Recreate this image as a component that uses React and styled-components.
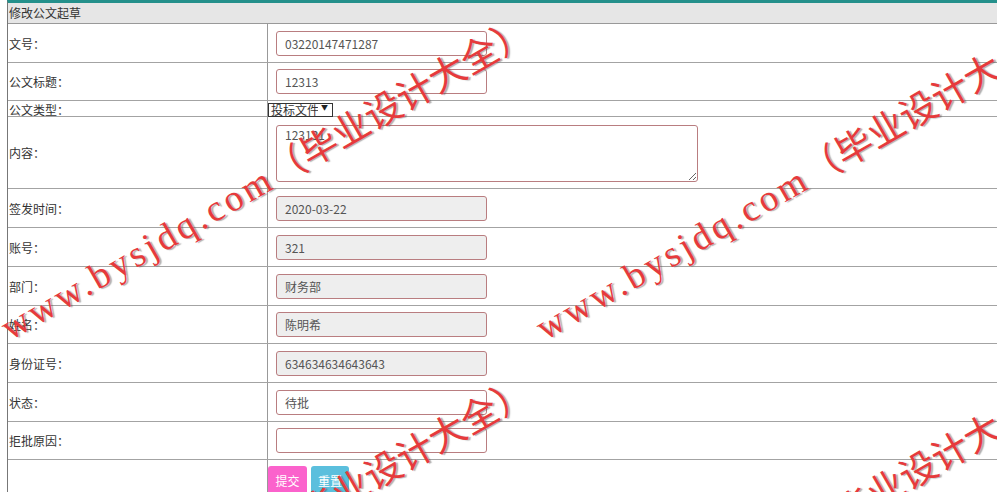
import React from "react";
import styled, { createGlobalStyle } from "styled-components";

const Global = createGlobalStyle`
  html, body { margin: 0; padding: 0; background: #fff; }
  body { font-family: "Noto Sans CJK SC", "Liberation Sans", sans-serif; font-size: 12px; color: #333; }
`;

const Page = styled.div`
  position: relative;
  height: 492px;
  overflow: hidden;
  padding-left: 7px;
`;

const Panel = styled.div`
  border-top: 3px solid #24908b;
  border-left: 1px solid #777;
  min-height: 489px;
`;

const Title = styled.div`
  height: 20px;
  line-height: 20px;
  background: #e6e6e6;
  border-bottom: 1px solid #999;
  padding-left: 1px;
  font-size: 12px;
  color: #333;
`;

const Row = styled.div`
  display: grid;
  grid-template-columns: 260px 1fr;
  height: ${(p) => p.$h}px;
  box-sizing: border-box;
  border-bottom: ${(p) => (p.$last ? "none" : "1px solid #a3a3a3")};
`;

const Label = styled.div`
  display: flex;
  align-items: center;
  border-right: 1px solid #999;
  padding-left: 1px;
  font-size: 12px;
  color: #333;
  white-space: nowrap;
  overflow: hidden;
`;

const Field = styled.div`
  display: flex;
  align-items: ${(p) => (p.$top ? "flex-start" : "center")};
  padding-top: ${(p) => (p.$top ? "3px" : "0")};
  gap: 4px;
`;

const Input = styled.input`
  box-sizing: border-box;
  width: 211px;
  height: 25px;
  margin-left: 8px;
  padding: 0 8px;
  border: 1px solid #b97d80;
  border-radius: 3px;
  background: ${(p) => (p.readOnly ? "#eeeeee" : "#fff")};
  font-family: "Noto Sans CJK SC", "Liberation Sans", sans-serif;
  font-size: 12px;
  color: #555;
  outline: none;
`;

const TextArea = styled.textarea`
  box-sizing: border-box;
  width: 422px;
  height: 57px;
  margin: 5px 0 0 8px;
  padding: 1px 8px;
  border: 1px solid #b97d80;
  border-radius: 3px;
  font-family: "Noto Sans CJK SC", "Liberation Sans", sans-serif;
  font-size: 12px;
  line-height: 16px;
  color: #555;
  outline: none;
  resize: vertical;
`;

const SelectWrap = styled.span`
  position: relative;
  display: inline-block;
`;

const Select = styled.select`
  appearance: none;
  -webkit-appearance: none;
  box-sizing: border-box;
  width: 65px;
  height: 14px;
  padding: 0 14px 0 2px;
  border: 1px solid #333;
  border-radius: 0;
  background: #fff;
  font-family: "Noto Sans CJK SC", sans-serif;
  font-size: 12px;
  line-height: 12px;
  color: #333;
  text-decoration: underline;
  outline: none;
`;

const Caret = styled.span`
  position: absolute;
  right: 5px;
  top: 1px;
  font-size: 7px;
  line-height: 11px;
  color: #222;
  pointer-events: none;
`;

const Button = styled.button`
  box-sizing: border-box;
  width: ${(p) => p.$w}px;
  height: 28px;
  margin-top: 3px;
  border: none;
  border-radius: 3px;
  background: ${(p) => p.$bg};
  color: #fff;
  font-family: "Noto Sans CJK SC", sans-serif;
  font-size: 12px;
  padding: 0;
`;

const Layer = styled.div`
  position: absolute;
  inset: 0;
  pointer-events: none;
  overflow: hidden;
`;

const Mark = styled.div`
  position: absolute;
  white-space: nowrap;
  font-family: "Liberation Serif", "Noto Sans CJK SC", serif;
  font-size: 37px;
  line-height: 40px;
  color: #e63a3c;
  text-shadow: 1.5px 1.5px 1px rgba(80, 80, 80, 0.45);
  transform-origin: 0 100%;
  transform: rotate(-30deg);
`;

const Latin = styled.span`
  letter-spacing: 3.6px;
`;

const Han = styled.span`
  letter-spacing: 0;
`;

const rows = [
  { label: "文号：", value: "03220147471287", h: 39 },
  { label: "公文标题：", value: "12313", h: 38 },
  { label: "公文类型：", type: "select", h: 16 },
  { label: "内容：", type: "textarea", value: "123131", h: 72 },
  { label: "签发时间：", value: "2020-03-22", ro: true, h: 39 },
  { label: "账号：", value: "321", ro: true, h: 39 },
  { label: "部门：", value: "财务部", ro: true, h: 39 },
  { label: "姓名：", value: "陈明希", ro: true, h: 38 },
  { label: "身份证号：", value: "634634634643643", ro: true, h: 39 },
  { label: "状态：", value: "待批", h: 39 },
  { label: "拒批原因：", value: "", h: 38 },
];

const marks = [
  [14, 308],
  [549, 308],
  [14, 668],
  [549, 668],
];

export default function App() {
  return (
    <>
      <Global />
      <Page>
        <Panel>
          <Title>修改公文起草</Title>
          {rows.map((r) => (
            <Row key={r.label} $h={r.h}>
              <Label>{r.label}</Label>
              {r.type === "select" ? (
                <Field>
                  <SelectWrap>
                    <Select defaultValue="投标文件">
                      <option>投标文件</option>
                      <option>通知公告</option>
                    </Select>
                    <Caret>▼</Caret>
                  </SelectWrap>
                </Field>
              ) : r.type === "textarea" ? (
                <Field $top>
                  <TextArea defaultValue={r.value} />
                </Field>
              ) : (
                <Field>
                  <Input defaultValue={r.value} readOnly={r.ro} />
                </Field>
              )}
            </Row>
          ))}
          <Row $h={40} $last>
            <Label />
            <Field $top>
              <Button $w={39} $bg="#fb62cc">提交</Button>
              <Button $w={38} $bg="#5bbfdd">重置</Button>
            </Field>
          </Row>
        </Panel>
        <Layer>
          {marks.map(([x, y], i) => (
            <Mark key={i} style={{ left: x, top: y }}>
              <Latin>www.bysjdq.com</Latin>
              <Han>（毕业设计大全）</Han>
            </Mark>
          ))}
        </Layer>
      </Page>
    </>
  );
}
